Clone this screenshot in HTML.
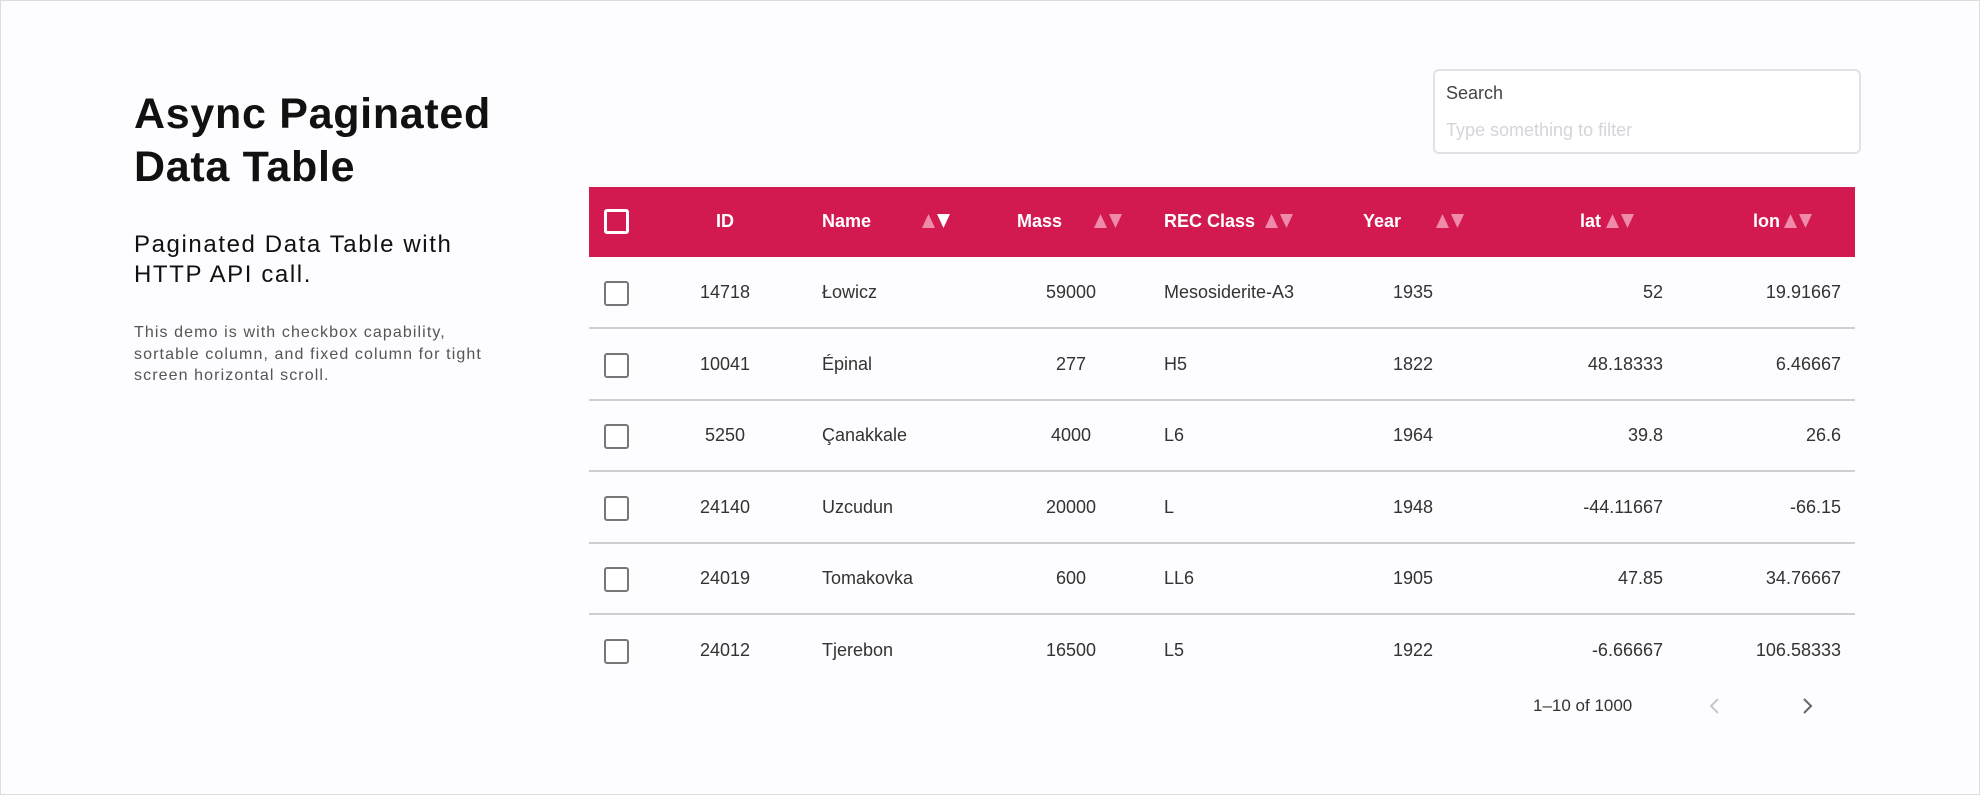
<!DOCTYPE html>
<html><head><meta charset="utf-8"><style>
*{margin:0;padding:0;box-sizing:border-box}
body{width:1980px;height:795px;background:#fdfcfe;font-family:"Liberation Sans",sans-serif;position:relative;overflow:hidden;border:1px solid #ddd;color:#222}
.a{position:absolute;white-space:nowrap}
h1{position:absolute;left:133px;top:87px;font-size:43px;line-height:53px;font-weight:700;color:#111;letter-spacing:0.7px}
.sub{left:133px;top:229px;font-size:24px;line-height:30px;color:#111;letter-spacing:1.6px}
.sm{left:133px;top:321px;font-size:16px;line-height:21.5px;color:#555;letter-spacing:1.1px}
.search{left:1432px;top:68px;width:428px;height:85px;border:2px solid #e2e2e6;border-radius:6px;background:#fff}
.head{left:588px;top:186px;width:1266px;height:70px;background:#d31a50}
.ht{color:#fff;font-weight:700;font-size:18px;top:210px}
.ar{top:212px}
.cb{width:25px;height:25px;border:2px solid #777;border-radius:3px;left:603px;background:#fff}
.line{left:588px;width:1266px;height:2px;background:#cfcfd3}
.c{font-size:18px;color:#333}
</style></head><body>
<h1>Async Paginated<br>Data Table</h1>
<div class="a sub">Paginated Data Table with<br>HTTP API call.</div>
<div class="a sm">This demo is with checkbox capability,<br>sortable column, and fixed column for tight<br>screen horizontal scroll.</div>
<div class="a search"></div>
<div class="a" style="left:1445px;top:82px;font-size:18px;color:#444">Search</div>
<div class="a" style="left:1445px;top:119px;font-size:18px;color:#d4d4da">Type something to filter</div>
<div class="a head"></div>
<div class="a" style="left:603px;top:208px;width:25px;height:25px;border:3px solid #fff;border-radius:3px"></div>
<div class="a ht" style="left:715px">ID</div>
<div class="a ht" style="left:821px">Name</div>
<svg class="a ar" style="left:920px" width="32" height="16"><path d="M1 15 L7.5 1 L14 15Z" fill="#f08aab"/><path d="M16 1 L29 1 L22.5 15Z" fill="#fff"/></svg>
<div class="a ht" style="left:1016px">Mass</div>
<svg class="a ar" style="left:1092px" width="32" height="16"><path d="M1 15 L7.5 1 L14 15Z" fill="#f08aab"/><path d="M16 1 L29 1 L22.5 15Z" fill="#f08aab"/></svg>
<div class="a ht" style="left:1163px">REC Class</div>
<svg class="a ar" style="left:1263px" width="32" height="16"><path d="M1 15 L7.5 1 L14 15Z" fill="#f08aab"/><path d="M16 1 L29 1 L22.5 15Z" fill="#f08aab"/></svg>
<div class="a ht" style="left:1362px">Year</div>
<svg class="a ar" style="left:1434px" width="32" height="16"><path d="M1 15 L7.5 1 L14 15Z" fill="#f08aab"/><path d="M16 1 L29 1 L22.5 15Z" fill="#f08aab"/></svg>
<div class="a ht" style="left:1579px">lat</div>
<svg class="a ar" style="left:1604px" width="32" height="16"><path d="M1 15 L7.5 1 L14 15Z" fill="#f08aab"/><path d="M16 1 L29 1 L22.5 15Z" fill="#f08aab"/></svg>
<div class="a ht" style="left:1752px">lon</div>
<svg class="a ar" style="left:1782px" width="32" height="16"><path d="M1 15 L7.5 1 L14 15Z" fill="#f08aab"/><path d="M16 1 L29 1 L22.5 15Z" fill="#f08aab"/></svg>
<div id="rows"></div>
<script>
var d=[["14718","Łowicz","59000","Mesosiderite-A3","1935","52","19.91667"],["10041","Épinal","277","H5","1822","48.18333","6.46667"],["5250","Çanakkale","4000","L6","1964","39.8","26.6"],["24140","Uzcudun","20000","L","1948","-44.11667","-66.15"],["24019","Tomakovka","600","LL6","1905","47.85","34.76667"],["24012","Tjerebon","16500","L5","1922","-6.66667","106.58333"]];
var h="";
d.forEach(function(r,i){var cy=292+i*71.6;var t=cy-11;
h+='<div class="a cb" style="top:'+(cy-12)+'px"></div>';
h+='<div class="a c" style="left:674px;width:100px;text-align:center;top:'+t+'px">'+r[0]+'</div>';
h+='<div class="a c" style="left:821px;top:'+t+'px">'+r[1]+'</div>';
h+='<div class="a c" style="left:1020px;width:100px;text-align:center;top:'+t+'px">'+r[2]+'</div>';
h+='<div class="a c" style="left:1163px;top:'+t+'px">'+r[3]+'</div>';
h+='<div class="a c" style="left:1362px;width:100px;text-align:center;top:'+t+'px">'+r[4]+'</div>';
h+='<div class="a c" style="left:1462px;width:200px;text-align:right;top:'+t+'px">'+r[5]+'</div>';
h+='<div class="a c" style="left:1640px;width:200px;text-align:right;top:'+t+'px">'+r[6]+'</div>';
if(i<5)h+='<div class="a line" style="top:'+(326+i*71.6)+'px"></div>';});
document.getElementById("rows").innerHTML=h;
</script>
<div class="a" style="left:1532px;top:695px;font-size:17px;color:#333">1–10 of 1000</div>
<svg class="a" style="left:1706px;top:695px" width="16" height="20"><path d="M11 3 L4 10 L11 17" stroke="#c8c8cc" stroke-width="2" fill="none"/></svg>
<svg class="a" style="left:1798px;top:695px" width="16" height="20"><path d="M5 3 L12 10 L5 17" stroke="#666" stroke-width="2" fill="none"/></svg>
</body></html>
